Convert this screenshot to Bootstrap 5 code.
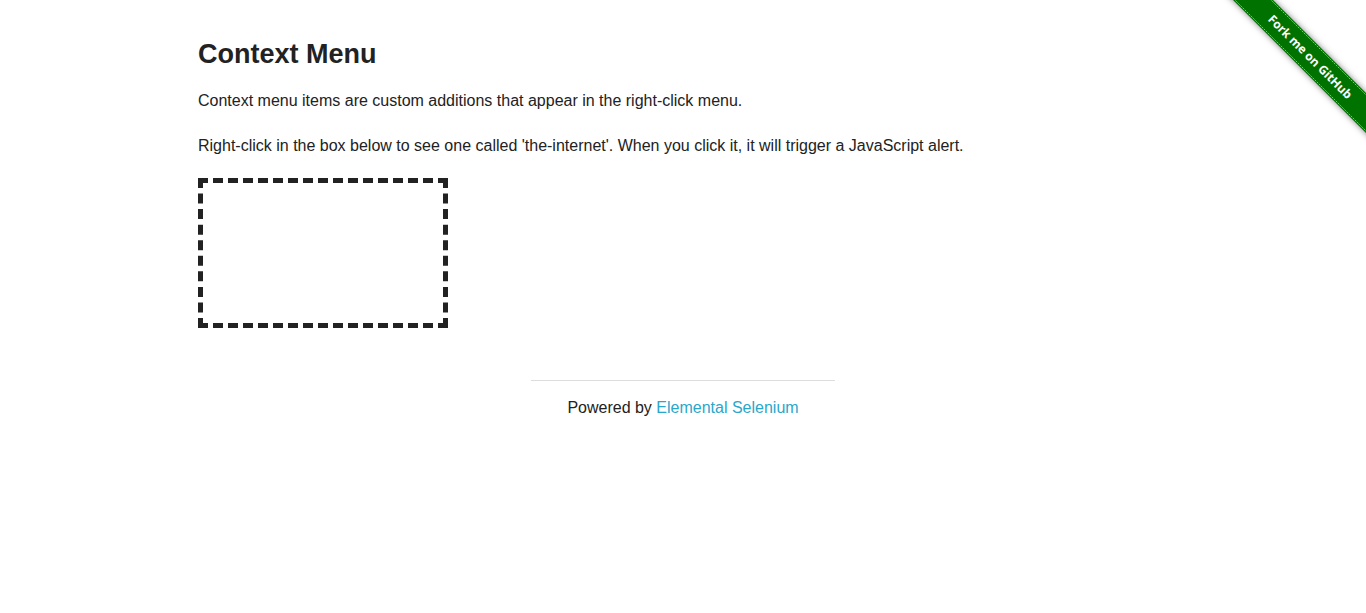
<!DOCTYPE html>
<html lang="en">
<head>
<meta charset="utf-8">
<meta name="viewport" content="width=device-width, initial-scale=1">
<title>The Internet</title>
<link href="https://cdn.jsdelivr.net/npm/bootstrap@5.3.0/dist/css/bootstrap.min.css" rel="stylesheet">
<style>
  body { font-family: "Liberation Sans", Arial, sans-serif; font-size: 16px; color: #222; background: #fff; overflow-x: hidden; }
  .page-row { max-width: 1002px; }
  h1 { font-size: 27px; line-height: 40px; font-weight: 700; margin: 34px 0 14px; }
  p { line-height: 26px; margin-bottom: 19px; }
  .hot-spot { width: 250px; height: 150px; border: 5px dashed #222; }
  .footer-rule { border-color: #ddd; opacity: 1; margin: 0 0 14px; }
  .footer-box { width: 304px; margin-top: 52px; line-height: 26px; }
  .footer-box a { color: #2ba6cb; }
  .ribbon { width: 149px; height: 149px; }
  .ribbon text { font: 700 12px "Open Sans", sans-serif; fill: #fff; }
</style>
</head>
<body>
<a class="ribbon d-block position-absolute top-0 end-0" href="#" aria-label="Fork me on GitHub">
  <svg class="d-block" width="149" height="149" viewBox="0 0 149 149" aria-hidden="true">
    <defs><filter id="shade" x="-20%" y="-20%" width="140%" height="140%"><feDropShadow dx="0" dy="0" stdDeviation="3" flood-opacity=".5"/></filter></defs>
    <path d="M16 0 -4 -20 H36 L169 113 V153Z" fill="#007200" filter="url(#shade)"/>
    <path d="M-2 -20 169 151 M34 -20 169 115" stroke="#7fc07f" stroke-width="1" stroke-dasharray="2 1" fill="none"/>
    <text transform="translate(93 57) rotate(45)" text-anchor="middle" y="4">Fork me on GitHub</text>
  </svg>
</a>
<main class="page-row container-fluid px-3">
  <h1>Context Menu</h1>
  <p>Context menu items are custom additions that appear in the right-click menu.</p>
  <p>Right-click in the box below to see one called 'the-internet'. When you click it, it will trigger a JavaScript alert.</p>
  <div class="hot-spot" id="hot-spot"></div>
</main>
<footer class="footer-box mx-auto text-center">
  <hr class="footer-rule">
  <div>Powered by <a class="text-decoration-none" href="#">Elemental Selenium</a></div>
</footer>
<script src="https://cdn.jsdelivr.net/npm/bootstrap@5.3.0/dist/js/bootstrap.bundle.min.js"></script>
</body>
</html>
